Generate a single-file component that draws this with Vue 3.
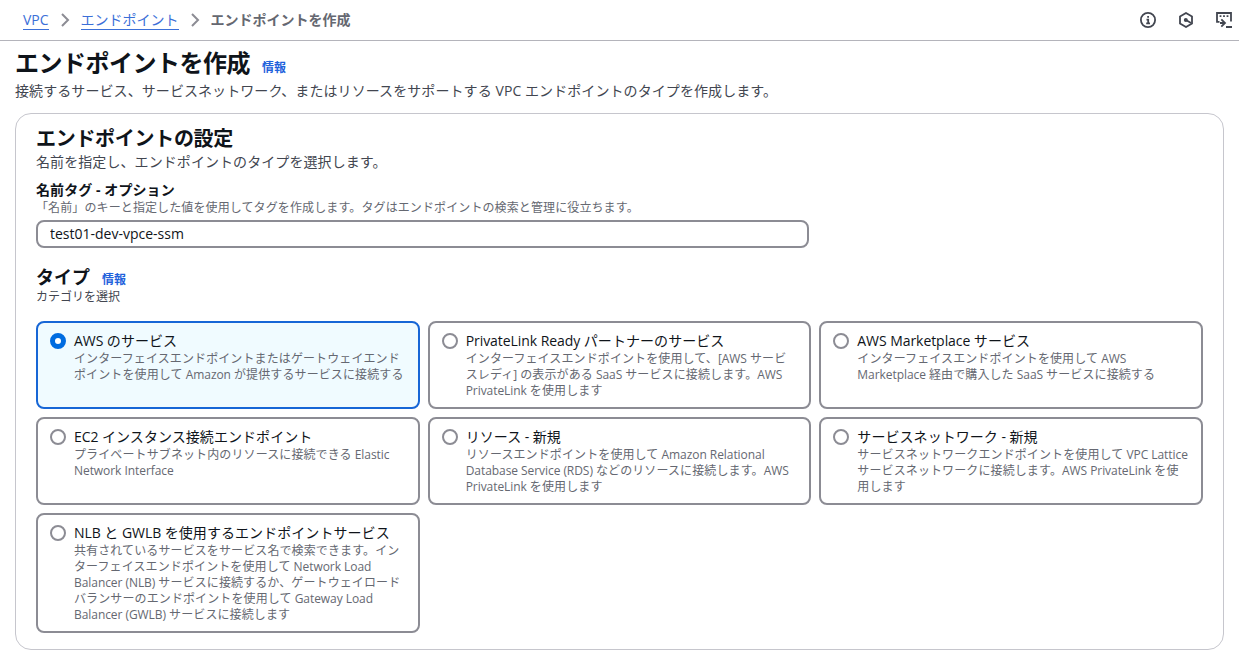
<script setup>
import { ref } from 'vue';

const name = ref('test01-dev-vpce-ssm');
const selected = ref('aws');

const types = [
  {
    id: 'aws',
    title: 'AWS のサービス',
    lines: ['インターフェイスエンドポイントまたはゲートウェイエンド', 'ポイントを使用して Amazon が提供するサービスに接続する']
  },
  {
    id: 'partner',
    title: 'PrivateLink Ready パートナーのサービス',
    lines: ['インターフェイスエンドポイントを使用して、[AWS サービ', 'スレディ] の表示がある SaaS サービスに接続します。AWS', 'PrivateLink を使用します']
  },
  {
    id: 'marketplace',
    title: 'AWS Marketplace サービス',
    lines: ['インターフェイスエンドポイントを使用して AWS', 'Marketplace 経由で購入した SaaS サービスに接続する']
  },
  {
    id: 'ec2',
    title: 'EC2 インスタンス接続エンドポイント',
    lines: ['プライベートサブネット内のリソースに接続できる Elastic', 'Network Interface']
  },
  {
    id: 'resource',
    title: 'リソース - 新規',
    lines: ['リソースエンドポイントを使用して Amazon Relational', 'Database Service (RDS) などのリソースに接続します。AWS', 'PrivateLink を使用します']
  },
  {
    id: 'network',
    title: 'サービスネットワーク - 新規',
    lines: ['サービスネットワークエンドポイントを使用して VPC Lattice', 'サービスネットワークに接続します。AWS PrivateLink を使', '用します']
  },
  {
    id: 'nlb',
    title: 'NLB と GWLB を使用するエンドポイントサービス',
    lines: [
      '共有されているサービスをサービス名で検索できます。イン',
      'ターフェイスエンドポイントを使用して Network Load',
      'Balancer (NLB) サービスに接続するか、ゲートウェイロード',
      'バランサーのエンドポイントを使用して Gateway Load',
      'Balancer (GWLB) サービスに接続します'
    ]
  }
];

// Latin and Japanese runs are tracked differently
const runs = (text) =>
  text.match(/[\x20-\x7e]+|[^\x20-\x7e]+/g).map((part) => ({
    part,
    latin: /^[\x20-\x7e]/.test(part)
  }));
</script>

<template>
  <div class="page">
    <header class="top-bar">
      <nav class="breadcrumb">
        <a class="crumb">VPC</a>
        <svg class="chevron" viewBox="0 0 16 16"><path d="M5 2l6 6-6 6" /></svg>
        <a class="crumb">エンドポイント</a>
        <svg class="chevron" viewBox="0 0 16 16"><path d="M5 2l6 6-6 6" /></svg>
        <span class="current">エンドポイントを作成</span>
      </nav>
      <div class="tools">
        <svg viewBox="0 0 16 16">
          <circle cx="8" cy="8" r="7.1" />
          <path d="M6.5 7.6H8.2V11.6M6.2 11.3h3.8M7.2 4.9h1.8" />
        </svg>
        <svg viewBox="0 0 16 16">
          <path d="M8 1l6 3.5v7L8 15l-6-3.5v-7z" />
          <path d="M8 8l5 3" />
          <circle class="dot" cx="7.8" cy="7.9" r="2" />
        </svg>
        <svg viewBox="0 0 16 16">
          <path d="M3.5 9.8H1V1h14v8.5M4 11h4.5M5.3 7.3L9 11l-3.7 3.7M10 15h6" />
          <path d="M3.6 4.2h1.8M7.1 4.2h1.8M10.6 4.2h1.8" />
        </svg>
      </div>
    </header>

    <main>
      <h1>エンドポイントを作成<a class="info">情報</a></h1>
      <p class="lead">接続するサービス、サービスネットワーク、またはリソースをサポートする VPC エンドポイントのタイプを作成します。</p>

      <section class="panel">
        <h2>エンドポイントの設定</h2>
        <p class="sub">名前を指定し、エンドポイントのタイプを選択します。</p>
        <label class="label" for="name">名前タグ - オプション</label>
        <p class="hint">「名前」のキーと指定した値を使用してタグを作成します。タグはエンドポイントの検索と管理に役立ちます。</p>
        <input id="name" v-model="name" class="name-input" type="text" spellcheck="false" />

        <h3>タイプ<a class="info">情報</a></h3>
        <p class="category">カテゴリを選択</p>
        <div class="tiles">
          <div
            v-for="item in types"
            :key="item.id"
            class="tile"
            :class="{ selected: item.id === selected }"
            @click="selected = item.id"
          >
            <span class="radio"></span>
            <div class="tile-text">
              <div class="tile-title">
                <span v-for="(run, i) in runs(item.title)" :key="i" :class="{ latin: run.latin }">{{ run.part }}</span>
              </div>
              <div v-for="line in item.lines" :key="line" class="tile-line">
                <span v-for="(run, i) in runs(line)" :key="i" :class="{ latin: run.latin }">{{ run.part }}</span>
              </div>
            </div>
          </div>
        </div>
      </section>
    </main>
  </div>
</template>

<style>
body {
  background: #fff;
  overflow: hidden;
}
</style>

<style scoped>
.page {
  height: 662px;
  box-sizing: border-box;
  overflow: hidden;
  font-family: 'Open Sans', 'Noto Sans CJK JP', sans-serif;
  font-size: 14px;
  line-height: 20px;
  color: #0f141a;
  white-space: nowrap;
}
h1,
h2,
h3,
p {
  margin: 0;
}
.top-bar {
  height: 40px;
  display: flex;
  align-items: center;
  justify-content: space-between;
  padding: 0 7px 0 23px;
  border-bottom: 1px solid #b4b4bb;
}
.breadcrumb {
  display: flex;
  align-items: center;
}
.crumb {
  height: 19px;
  line-height: 20px;
  color: #3b6fd8;
  border-bottom: 1px solid #3b6fd8;
}
.chevron {
  width: 16px;
  height: 16px;
  margin: 0 8px;
  fill: none;
  stroke: #8c8c94;
  stroke-width: 2;
}
.current {
  color: #656871;
  font-weight: 700;
}
.tools {
  display: flex;
  gap: 22px;
}
.tools svg {
  width: 16px;
  height: 16px;
  fill: none;
  stroke: #424650;
  stroke-width: 1.8;
}
.tools .dot {
  fill: #424650;
  stroke: none;
}
main {
  padding: 7px 15px 0;
}
h1 {
  display: flex;
  align-items: baseline;
  height: 30px;
  font-size: 24px;
  line-height: 30px;
  letter-spacing: -0.5px;
}
.info {
  margin-left: 12px;
  font-size: 12px;
  line-height: 16px;
  font-weight: 700;
  letter-spacing: 0;
  color: #1f62dc;
}
.lead {
  margin-top: 3px;
  letter-spacing: 0.08px;
  color: #424650;
}
.panel {
  height: 537px;
  box-sizing: border-box;
  margin-top: 12px;
  padding: 13px 20px 0;
  border: 1px solid #c6c6cd;
  border-radius: 16px;
}
h2 {
  font-size: 20px;
  line-height: 24px;
  letter-spacing: -0.3px;
}
.sub {
  margin-top: 1px;
  letter-spacing: 0.08px;
  color: #424650;
}
.label {
  display: block;
  margin-top: 8px;
  font-weight: 700;
  letter-spacing: 0.08px;
}
.hint {
  font-size: 12px;
  line-height: 16px;
  letter-spacing: 0.11px;
  color: #656871;
}
.name-input {
  display: block;
  width: 773px;
  height: 28px;
  box-sizing: border-box;
  margin-top: 4px;
  padding: 0 12px 2px;
  border: 2px solid #8c8c94;
  border-radius: 8px;
  outline: none;
  font: inherit;
  color: inherit;
}
h3 {
  display: flex;
  align-items: baseline;
  height: 22px;
  margin-top: 18px;
  font-size: 18px;
  line-height: 22px;
}
.category {
  margin-top: 1px;
  font-size: 12px;
  line-height: 16px;
  color: #424650;
}
.tiles {
  display: grid;
  grid-template-columns: repeat(3, 1fr);
  gap: 8px;
  margin-top: 16px;
}
.tile {
  display: flex;
  min-width: 0;
  padding: 8px 12px;
  border: 2px solid #8c8c94;
  border-radius: 8px;
}
.tile.selected {
  border-color: #1766d6;
  background: #f0fbff;
}
.radio {
  flex: none;
  width: 16px;
  height: 16px;
  box-sizing: border-box;
  margin: 2px 8px 0 0;
  border: 2px solid #8c8c94;
  border-radius: 50%;
  background: #fff;
}
.selected .radio {
  border: 5px solid #006ce0;
}
.tile-title {
  line-height: 20px;
  letter-spacing: 0.06px;
}
.tile-line {
  font-size: 12px;
  line-height: 16px;
  letter-spacing: 0.11px;
  color: #656871;
}
.latin {
  white-space: pre;
  letter-spacing: -0.06px;
}
</style>
